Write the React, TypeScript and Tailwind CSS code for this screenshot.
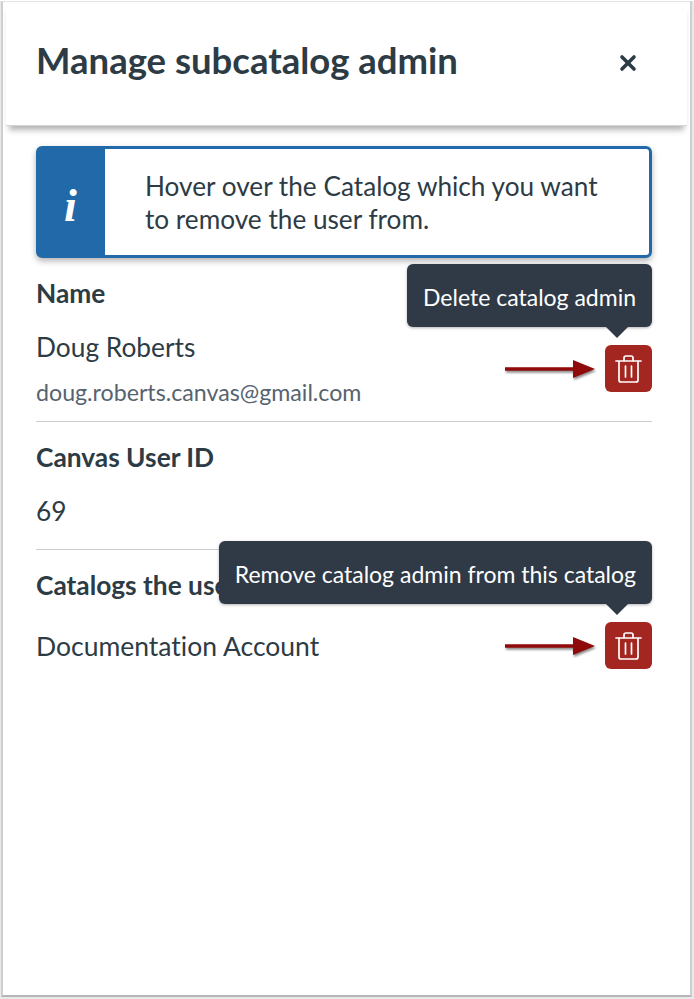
import { X } from 'lucide-react';

function TrashButton() {
  return (
    <button className="w-[47px] h-[47px] rounded-[6px] bg-[#a32720] flex items-center justify-center">
      <svg width="27" height="28" viewBox="0 0 27 28" fill="none" stroke="#fff" strokeWidth="1.7" strokeLinecap="round" strokeLinejoin="round">
        <path d="M1 6H26" />
        <path d="M9 5.5V3C9 1.9 9.8 1 11 1H16C17.2 1 18 1.9 18 3V5.5" />
        <path d="M4 6.5V25C4 26.2 4.8 27 6 27H21C22.2 27 23 26.2 23 25V6.5" />
        <path d="M10.5 11V22" />
        <path d="M16.5 11V22" />
      </svg>
    </button>
  );
}

function RedArrow() {
  return (
    <svg width="92" height="24" viewBox="0 0 92 24" className="drop-shadow-[1px_2px_1px_rgba(0,0,0,0.45)]">
      <path d="M1 10.2H69V3L91 12L69 21V13.8H1Z" fill="#8f0a0a" />
    </svg>
  );
}

function Tooltip({ label }: { label: string }) {
  return (
    <div className="absolute right-0 bottom-[65px] h-[63px] rounded-[6px] bg-[#2f3a46] px-4 pt-[3px] flex items-center text-[23px] text-white whitespace-nowrap shadow-[0_1px_3px_rgba(0,0,0,0.3)]">
      {label}
      <div className="absolute right-[24px] bottom-[-11px] w-0 h-0 border-x-[11px] border-x-transparent border-t-[11px] border-t-[#2f3a46]" />
    </div>
  );
}

function AdminAction({ label }: { label: string }) {
  return (
    <div className="flex items-center gap-[9px]">
      <RedArrow />
      <div className="relative">
        <Tooltip label={label} />
        <TrashButton />
      </div>
    </div>
  );
}

export default function App() {
  return (
    <div className="w-[694px] h-[999px] bg-[#e9e9e9] font-['Lato',sans-serif] text-[#2d3b45] [font-variant-ligatures:none]">
      <div className="w-[691px] h-[996px] ml-[1px] mt-[1px] bg-white border-x-2 border-x-[#cfcfcf] border-b-2 border-b-[#b5b5b5] border-t border-t-[#e4e4e4] flex flex-col">
        <header className="h-[124px] mx-[3px] pl-[30px] pr-[47px] pb-[6px] flex items-center justify-between shadow-[0_7px_6px_-3px_rgba(0,0,0,0.3)] border-b border-b-[#d5d5d5]">
          <h1 className="text-[36.5px] font-bold leading-none">Manage subcatalog admin</h1>
          <X size={24} strokeWidth={3.6} className="mt-[4px] text-[#2d3b45]" />
        </header>

        <main className="px-[33px] pt-[20px]">
          <div className="w-[616px] h-[112px] flex rounded-[6px] border-[3px] border-[#2169a8] shadow-[0_3px_6px_rgba(0,0,0,0.3)]">
            <div className="w-[66px] bg-[#2169a8] flex items-center justify-center pr-[3px] pt-[8px]">
              <span className="font-['Liberation_Serif',serif] italic font-bold text-[46px] leading-none text-white">i</span>
            </div>
            <p className="pl-[40px] pt-[21px] text-[26.2px] leading-[33px]">
              Hover over the Catalog which you want
              <br />
              to remove the user from.
            </p>
          </div>

          <section className="w-[616px] h-[164px] border-b border-b-[#c7cdd1] pt-[19px]">
            <h2 className="text-[26.3px] font-bold leading-[32px]">Name</h2>
            <div className="flex items-center justify-between mt-[22px]">
              <div>
                <p className="text-[26.3px] leading-[32px]">Doug Roberts</p>
                <p className="mt-[15px] text-[23.2px] leading-[28px] text-[#56636f]">doug.roberts.canvas@gmail.com</p>
              </div>
              <AdminAction label="Delete catalog admin" />
            </div>
          </section>

          <section className="w-[616px] h-[128px] border-b border-b-[#c7cdd1] pt-[19px]">
            <h2 className="text-[26.3px] font-bold leading-[32px]">Canvas User ID</h2>
            <p className="mt-[22px] text-[26.3px] leading-[32px]">69</p>
          </section>

          <section className="w-[616px] pt-[19px]">
            <h2 className="text-[26.3px] font-bold leading-[32px]">Catalogs the user is admin of</h2>
            <div className="flex items-center justify-between mt-[21px]">
              <p className="text-[26.5px] leading-[32px]">Documentation Account</p>
              <AdminAction label="Remove catalog admin from this catalog" />
            </div>
          </section>
        </main>
      </div>
    </div>
  );
}
